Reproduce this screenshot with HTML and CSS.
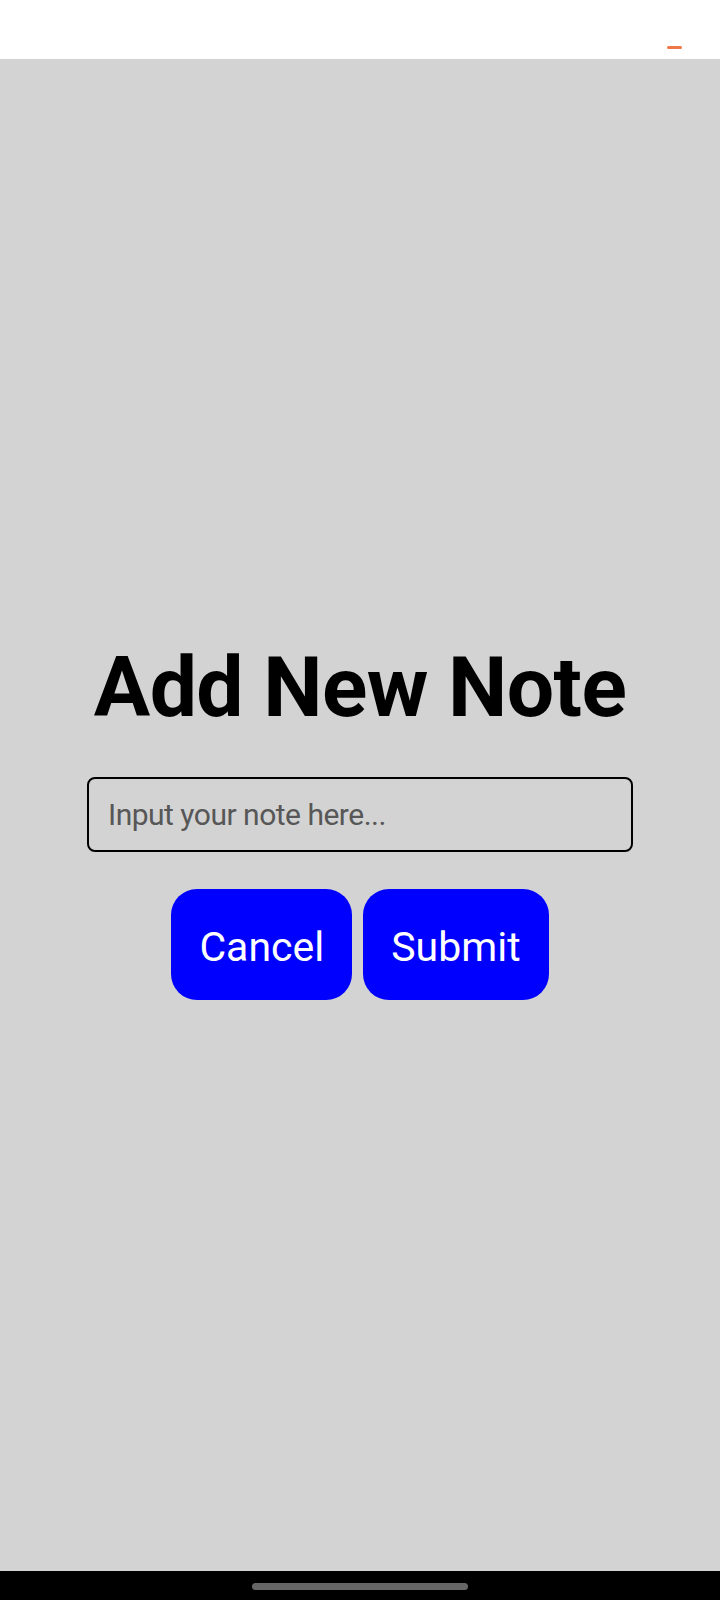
FILE: index.html
```html
<!DOCTYPE html>
<html>
<head>
<meta charset="utf-8">
<link rel="stylesheet" href="styles.css">
</head>
<body>
<div class="screen">
  <header class="status-bar">
    <span class="indicator"></span>
  </header>
  <main class="content">
    <h1 class="title">Add New Note</h1>
    <div class="note-input">Input your note here...</div>
    <div class="actions">
      <button class="btn">Cancel</button>
      <button class="btn">Submit</button>
    </div>
  </main>
  <footer class="nav-bar">
    <span class="handle"></span>
  </footer>
</div>
</body>
</html>
```
FILE: styles.css
```css
html, body {
  margin: 0;
  padding: 0;
}
body {
  font-family: Roboto, "Liberation Sans", sans-serif;
  width: 720px;
  height: 1600px;
  overflow: hidden;
}
.screen {
  display: flex;
  flex-direction: column;
  height: 1600px;
}
.status-bar {
  height: 59px;
  background: #ffffff;
  display: flex;
  justify-content: flex-end;
  align-items: flex-start;
  padding-right: 38px;
  box-sizing: border-box;
}
.indicator {
  width: 15px;
  height: 3px;
  border-radius: 2px;
  background: #f07848;
  margin-top: 46px;
}
.content {
  flex: 1;
  background: #d3d3d3;
  display: flex;
  flex-direction: column;
  align-items: center;
  justify-content: center;
  padding-top: 8px;
}
.title {
  margin: 0;
  font-size: 84px;
  line-height: 100px;
  letter-spacing: -0.6px;
  font-weight: 700;
  color: #000;
}
.note-input {
  margin-top: 39px;
  width: 546px;
  height: 75px;
  box-sizing: border-box;
  border: 2px solid #000;
  border-radius: 8px;
  padding-left: 19px;
  display: flex;
  align-items: center;
  font-size: 30px;
  letter-spacing: -0.5px;
  color: #575757;
}
.actions {
  margin-top: 37px;
  display: flex;
  gap: 11px;
}
.btn {
  height: 111px;
  padding: 5px 28px 0;
  border: none;
  border-radius: 26px;
  background: #0000ff;
  color: #ffffff;
  font-family: Roboto, "Liberation Sans", sans-serif;
  font-size: 41px;
  line-height: 1;
}
.nav-bar {
  height: 29px;
  background: #000;
  display: flex;
  justify-content: center;
  align-items: flex-start;
}
.handle {
  width: 216px;
  height: 7px;
  border-radius: 4px;
  background: #666666;
  margin-top: 12px;
}
```
